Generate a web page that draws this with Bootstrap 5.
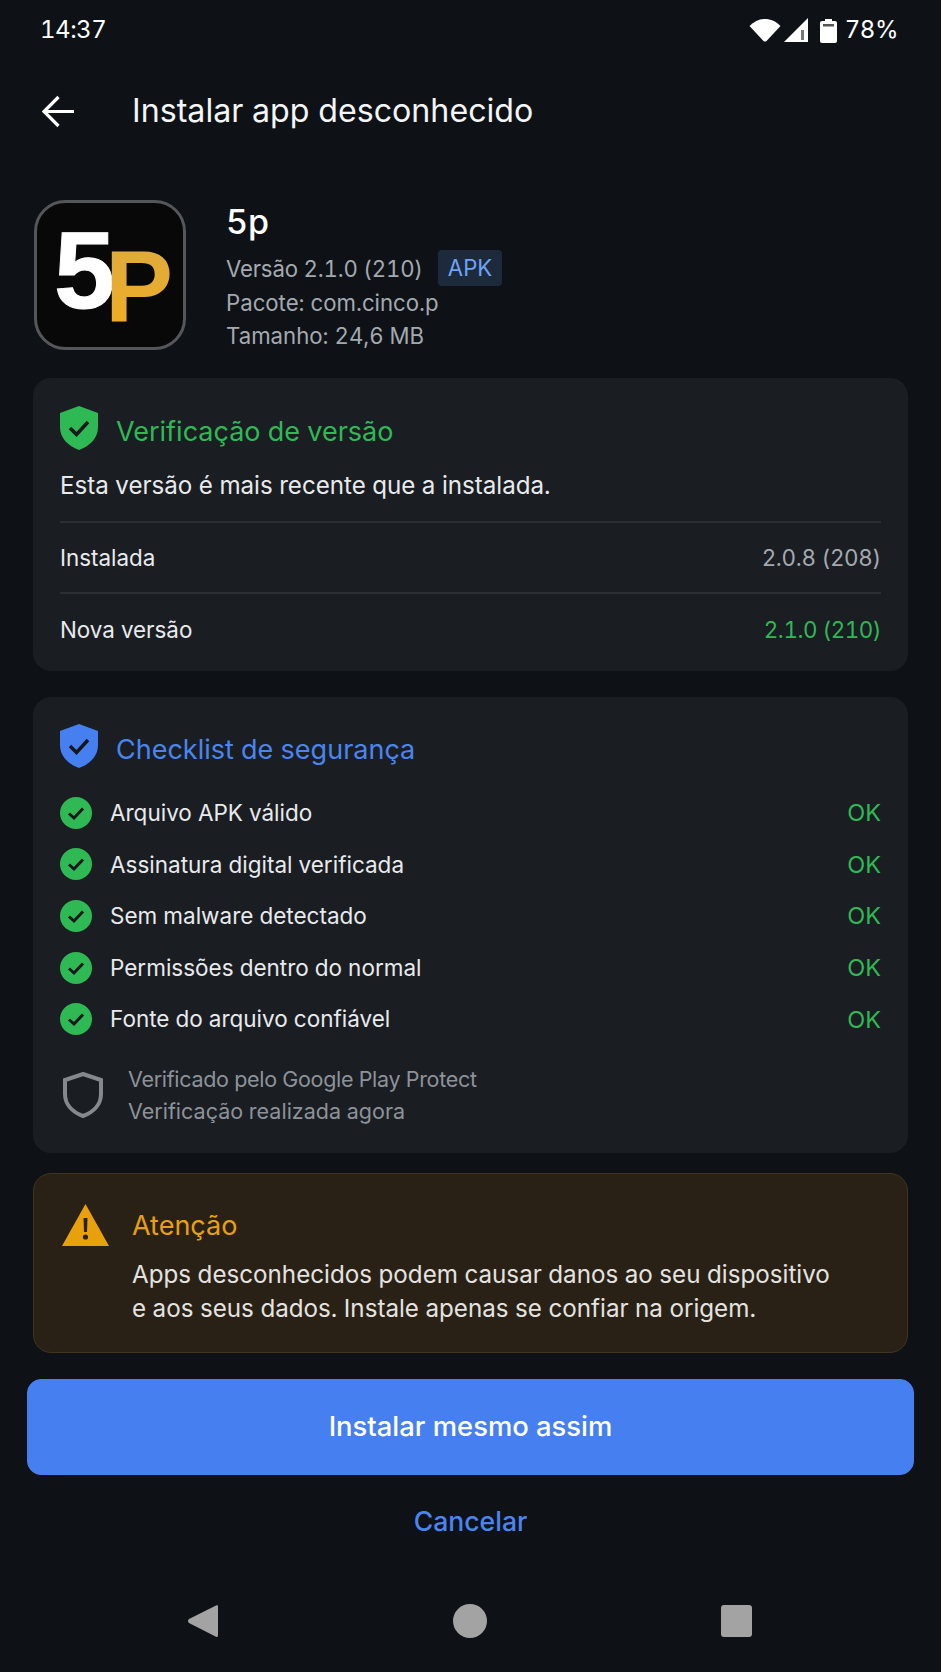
<!DOCTYPE html>
<html lang="pt-BR">
<head>
  <meta charset="UTF-8" />
  <title>Instalar app desconhecido</title>
  <link rel="stylesheet" href="https://cdn.jsdelivr.net/npm/bootstrap@5.3.0/dist/css/bootstrap.min.css" />
  <style>
    html, body { background: #0e1217; }
    body {
      width: 941px;
      height: 1672px;
      overflow: hidden;
      font-family: Inter, "Liberation Sans", sans-serif;
      font-variant-numeric: tabular-nums;
      color: #e9eaec;
    }
    .status-bar { height: 58px; padding: 2px 43px 0 40px; font-size: 24px; letter-spacing: -0.5px; color: #fff; }
    .status-icons svg { display: block; }
    .signal-icon { margin-left: 3px; }
    .battery-icon { margin-left: 11px; margin-right: 8px; }
    .app-bar { height: 106px; padding-left: 42px; }
    .app-bar h1 { font-size: 32.2px; font-weight: 400; margin: 0 0 0 57px; color: #f4f5f6; }
    .app-info { margin: 36px 0 28px 34px; height: 150px; }
    .app-logo { width: 152px; height: 150px; display: block; }
    .app-text { margin-left: 40px; color: #a4a9b0; font-size: 22.2px; line-height: 33px; }
    .app-name { font-size: 34px; line-height: 44px; font-weight: 500; color: #fff; margin-bottom: 6px; }
    .version-line { letter-spacing: -0.2px; }
    .apk-tag {
      background: #1d2a3b; color: #6fa3f5; border-radius: 4px; letter-spacing: 0;
      padding: 0 10px; height: 36px; line-height: 36px; margin-left: 15px;
    }
    .info-card {
      background: #1a1e23; border: 0; border-radius: 18px;
      margin: 0 33px; color: #e9eaec;
    }
    .version-card { height: 293px; margin-bottom: 26px; padding: 28px 27px 0; }
    .check-card { height: 456px; margin-bottom: 20px; padding: 27px 27px 0; }
    .card-head { height: 44px; margin-bottom: 8px; }
    .card-head h2 { font-size: 27px; font-weight: 400; margin: 9px 0 0 18px; }
    .head-green { color: #2fb954; }
    .head-blue { color: #4a85ef; }
    .intro-line {
      font-size: 24.15px; line-height: 36px; margin: 0; height: 65px; padding-top: 10px;
      border-bottom: 2px solid #2a2f35;
    }
    .version-list .list-group-item {
      background: transparent; color: #e9eaec; padding: 0;
      height: 71px; font-size: 22.4px; border-color: #2a2f35; border-width: 0 0 2px;
    }
    .version-list .list-group-item:last-child { border-width: 0; }
    .ver-old { color: #a4a9b0; letter-spacing: -0.3px; }
    .ver-new { color: #2fb954; letter-spacing: -0.5px; }
    .check-list { margin-top: 11px; }
    .check-row { height: 51.6px; font-size: 22.5px; }
    .check-dot { width: 32px; height: 32px; margin-right: 18px; flex: none; display: block; }
    .ok-mark { color: #2fb954; font-size: 23.5px; }
    .protect-row { margin-top: 18px; color: #8d9299; font-size: 21.5px; line-height: 32px; padding-left: 3px; }
    .protect-row svg { margin-right: 25px; flex: none; }
    .protect-top { letter-spacing: -0.3px; }
    .warn-card {
      background: #2a2116; border: 1px solid #41351f; border-radius: 18px;
      margin: 0 33px 26px; height: 180px; padding: 30px 0 0 28px;
    }
    .warn-card svg { flex: none; margin-right: 23px; }
    .warn-title { color: #e8a10c; font-size: 27px; line-height: 44px; margin-bottom: 10px; }
    .warn-text { font-size: 24.2px; line-height: 34px; color: #e4e3e0; margin: 0; }
    .install-btn {
      --bs-btn-bg: #4680f0; --bs-btn-border-color: #4680f0;
      display: block; margin: 0 27px; width: 887px; height: 96px;
      border-radius: 14px; font-size: 27.4px; font-weight: 500; color: #fff;
    }
    .cancel-btn {
      display: block; margin: 20px auto 0; padding: 0; height: 50px; line-height: 50px;
      font-size: 26.6px; font-weight: 500; color: #4a85ef; text-decoration: none;
    }
    .nav-keys { height: 36px; margin-top: 58px; padding: 0 189px 0 188px; }
  </style>
</head>
<body>
  <!-- barra de status -->
  <div class="status-bar d-flex align-items-center justify-content-between">
    <span>14:37</span>
    <div class="status-icons d-flex align-items-center">
      <svg width="32" height="24" viewBox="0 0 32 24"><path d="M0.5 8 C9 -1.5 23 -1.5 31.5 8 L17.5 23 Q16 24 14.5 23 Z" fill="#fff"/></svg>
      <svg class="signal-icon" width="25" height="25" viewBox="0 0 25 25"><path d="M24 0 V24 H0 Z" fill="#fff"/><path d="M17 12 h3 v10 h-3 z" fill="#777"/></svg>
      <svg class="battery-icon" width="17" height="25" viewBox="0 0 17 25"><path d="M5 1 h7 v2 h3 q2 0 2 2 v18 q0 2 -2 2 h-13 q-2 0 -2 -2 v-18 q0 -2 2 -2 h3 z" fill="#fff"/><path d="M3 6 h11 v2.500 h-11 z" fill="#555"/></svg>
      <span>78%</span>
    </div>
  </div>

  <!-- topo -->
  <div class="app-bar d-flex align-items-center">
    <svg width="33" height="33" viewBox="0 0 33 33"><path d="M32 16.500 H2 M16.500 2 L2 16.500 L16.500 31" fill="none" stroke="#fff" stroke-width="3.200"/></svg>
    <h1>Instalar app desconhecido</h1>
  </div>

  <!-- app -->
  <div class="app-info d-flex">
    <svg class="app-logo" viewBox="0 0 152 150">
      <defs>
        <linearGradient id="goldP" x1="0" y1="0" x2="0" y2="1">
          <stop offset="0" stop-color="#d9aa4a"/>
          <stop offset="1" stop-color="#f0ad1e"/>
        </linearGradient>
      </defs>
      <rect x="1.500" y="1.500" width="149" height="147" rx="30" fill="#080808" stroke="#55565a" stroke-width="3"/>
      <text font-family="Liberation Sans" font-weight="700"><tspan x="20" y="108" font-size="110" fill="#fff" stroke="#fff" stroke-width="1">5</tspan><tspan x="71" y="122" font-size="102" fill="url(#goldP)">P</tspan></text>
    </svg>
    <div class="app-text">
      <div class="app-name">5p</div>
      <div class="version-line d-flex align-items-center">Versão 2.1.0 (210)<span class="apk-tag">APK</span></div>
      <div>Pacote: com.cinco.p</div>
      <div>Tamanho: 24,6 MB</div>
    </div>
  </div>

  <!-- verificação de versão -->
  <div class="card info-card version-card">
    <div class="card-head d-flex align-items-center">
      <svg width="38" height="44" viewBox="0 0 38 44"><path d="M19 0 L38 7 V21 C38 32 30 40 19 44 C8 40 0 32 0 21 V7 Z" fill="#2fb954"/><path d="M10 22 L16.500 28.500 L28 16" fill="none" stroke="#14181d" stroke-width="3.500"/></svg>
      <h2 class="head-green">Verificação de versão</h2>
    </div>
    <p class="intro-line">Esta versão é mais recente que a instalada.</p>
    <ul class="list-group list-group-flush version-list">
      <li class="list-group-item d-flex align-items-center justify-content-between"><span>Instalada</span><span class="ver-old">2.0.8 (208)</span></li>
      <li class="list-group-item d-flex align-items-center justify-content-between"><span>Nova versão</span><span class="ver-new">2.1.0 (210)</span></li>
    </ul>
  </div>

  <!-- checklist -->
  <div class="card info-card check-card">
    <div class="card-head d-flex align-items-center">
      <svg width="38" height="44" viewBox="0 0 38 44"><path d="M19 0 L38 7 V21 C38 32 30 40 19 44 C8 40 0 32 0 21 V7 Z" fill="#4680f0"/><path d="M10 22 L16.500 28.500 L28 16" fill="none" stroke="#14181d" stroke-width="3.500"/></svg>
      <h2 class="head-blue">Checklist de segurança</h2>
    </div>
    <div class="check-list" id="checkList"></div>
    <div class="protect-row d-flex align-items-center">
      <svg width="40" height="46" viewBox="0 0 40 46"><path d="M20 2 L38 8 V22 C38 32 31 40 20 44 C9 40 2 32 2 22 V8 Z" fill="none" stroke="#85888d" stroke-width="4"/></svg>
      <div><div class="protect-top">Verificado pelo Google Play Protect</div><div>Verificação realizada agora</div></div>
    </div>
  </div>

  <!-- aviso -->
  <div class="warn-card d-flex">
    <svg width="47" height="42" viewBox="0 0 47 42"><path d="M23.500 0 L47 42 H0 Z" fill="#e8a10c"/><path d="M21.500 14 h4 l-0.500 14 h-3 z" fill="#2a2116"/><circle cx="23.500" cy="33" r="2.600" fill="#2a2116"/></svg>
    <div>
      <div class="warn-title">Atenção</div>
      <p class="warn-text">Apps desconhecidos podem causar danos ao seu dispositivo<br/>e aos seus dados. Instale apenas se confiar na origem.</p>
    </div>
  </div>

  <button class="btn btn-primary install-btn" type="button">Instalar mesmo assim</button>
  <a class="btn btn-link cancel-btn" href="#">Cancelar</a>

  <!-- navegação -->
  <div class="nav-keys d-flex align-items-center justify-content-between">
    <svg width="30" height="34" viewBox="0 0 30 34"><path d="M28 1.500 Q30 0 30 3 V31 Q30 34 27.500 32.500 L1 19 Q-1 17 1 15 Z" fill="#a3a3a3"/></svg>
    <svg width="34" height="34" viewBox="0 0 34 34"><circle cx="17" cy="17" r="17" fill="#a3a3a3"/></svg>
    <svg width="31" height="32" viewBox="0 0 31 32"><rect width="31" height="32" rx="3" fill="#a3a3a3"/></svg>
  </div>

  <script src="https://cdn.jsdelivr.net/npm/bootstrap@5.3.0/dist/js/bootstrap.bundle.min.js"></script>
  <script>
    // itens do checklist
    const checks = [
      "Arquivo APK válido",
      "Assinatura digital verificada",
      "Sem malware detectado",
      "Permissões dentro do normal",
      "Fonte do arquivo confiável"
    ];
    document.getElementById("checkList").innerHTML = checks.map((label) => `
      <div class="check-row d-flex align-items-center">
        <svg class="check-dot" viewBox="0 0 32 32"><circle cx="16" cy="16" r="16" fill="#2fb954"/><path d="M9 16.500 L14 21 L23 11.500" fill="none" stroke="#14181d" stroke-width="3"/></svg>
        <span class="flex-grow-1">${label}</span>
        <span class="ok-mark">OK</span>
      </div>
    `).join("");
  </script>
</body>
</html>
